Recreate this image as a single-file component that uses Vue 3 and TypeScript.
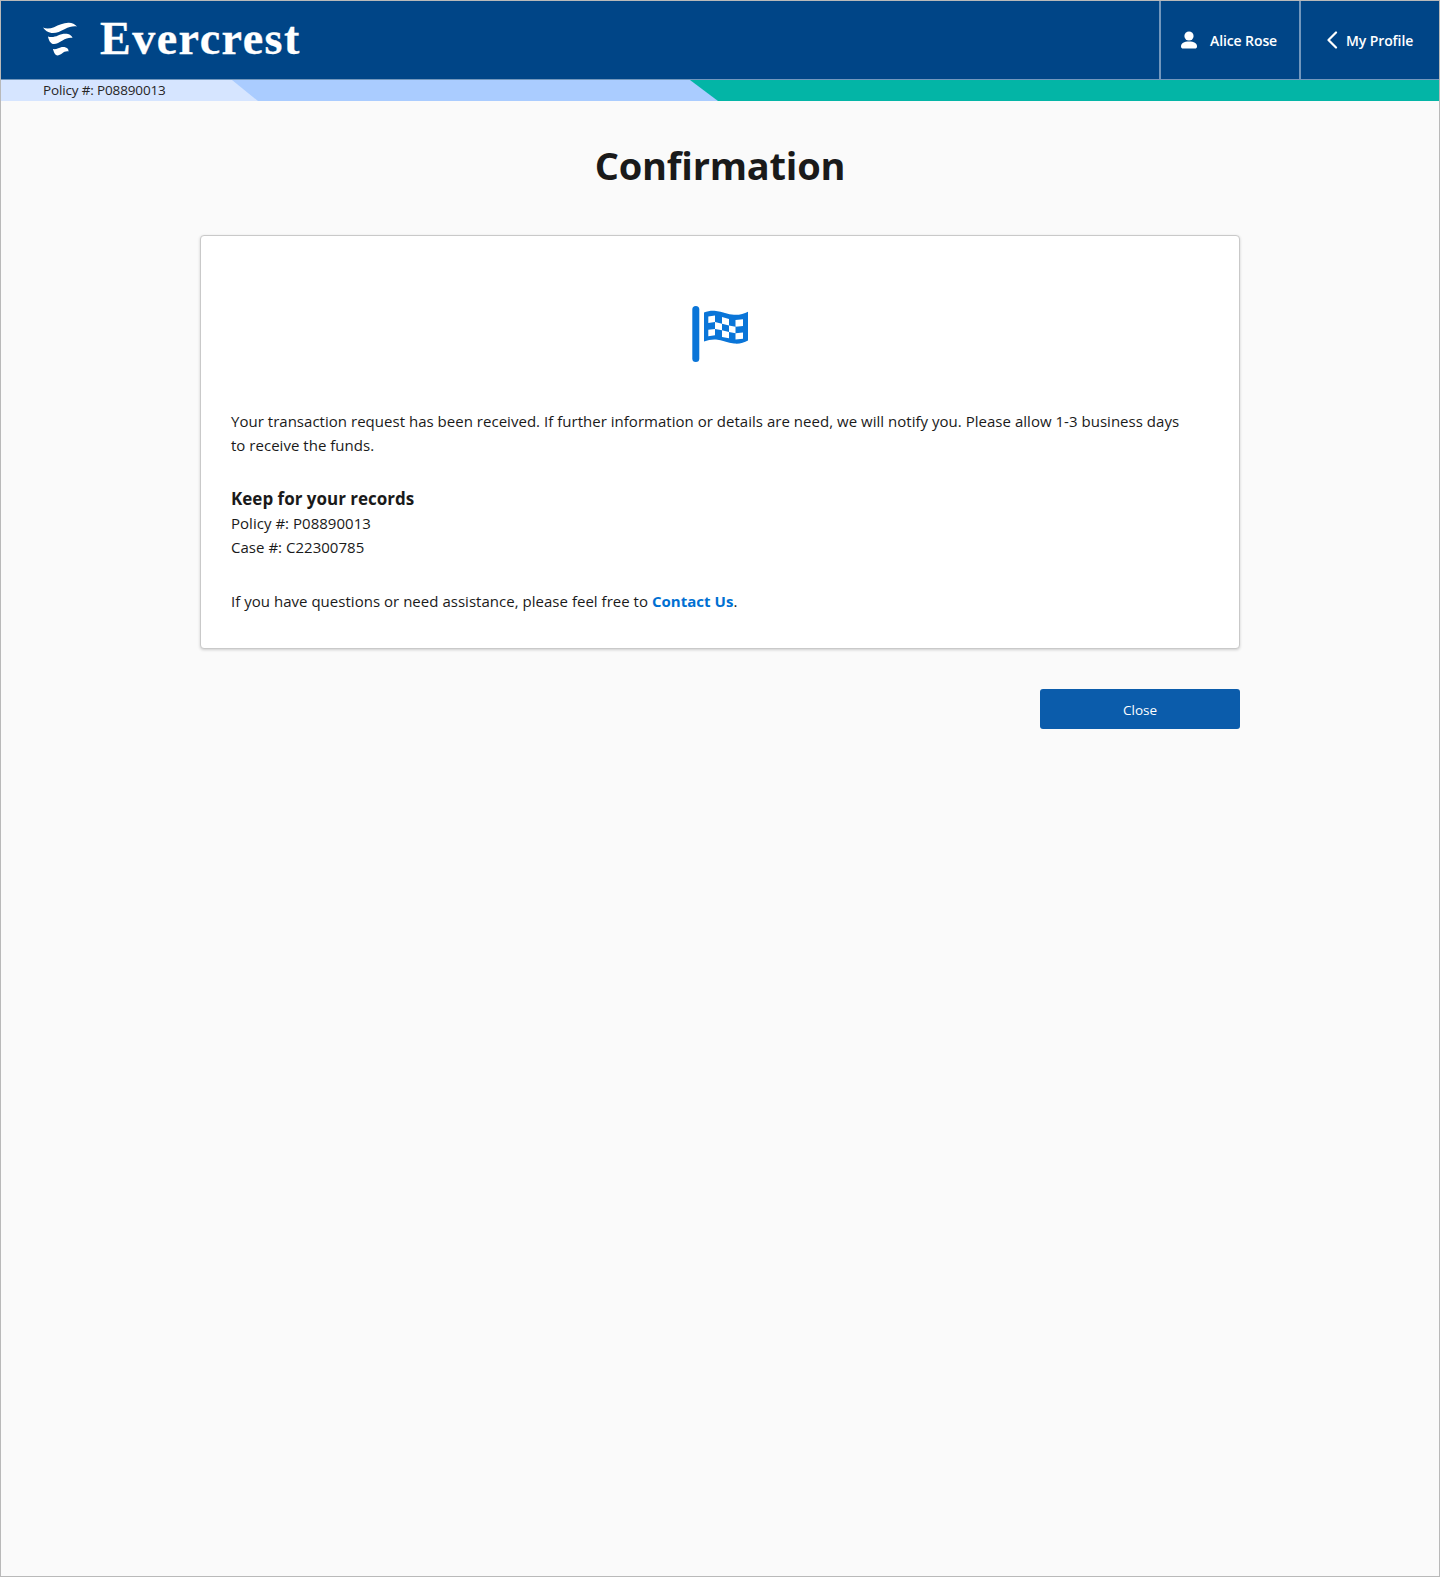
<script setup lang="ts">
const policy = 'P08890013'
const caseNo = 'C22300785'
</script>

<template>
  <div class="page">
    <header class="topbar">
      <div class="brand">
        <svg class="brand-mark" width="36" height="36" viewBox="0 0 36 36" aria-hidden="true">
          <path d="M1 5.500C4 7 8 6.800 12 5.200C17 3 22 0.500 27 0.800C30 1 33 2.300 35 4.500C31 3.800 27 5 23 7C18 9.500 14 11.500 9.500 11C6 10.500 3 8.500 1 5.500Z" fill="#fff"/>
          <path d="M6 14.500C9 15.500 13 15 16 13.500C19 12 23 11.300 26 12C28 12.500 30 14 30.500 16C27 15.500 24 16.500 20.500 18.500C17 20.500 14 22.500 11 22C8.500 21.500 6.500 18 6 14.500Z" fill="#fff"/>
          <path d="M11 27C14 27.500 16 26.500 18.500 25.500C21 24.500 24 25 26 27C26.500 28 26.500 29 26.500 29.500C24 29 22 30 20 31.500C18 33 15.500 34 14 33C12.500 32 11.500 29.500 11 27Z" fill="#fff"/>
        </svg>
        <span class="brand-name">Evercrest</span>
      </div>
      <nav class="topnav">
        <a class="navitem user">
          <svg width="18" height="18" viewBox="0 0 18 18" aria-hidden="true">
            <circle cx="9" cy="5" r="4.600" fill="#fff"/>
            <path d="M1 15.500C1 12 4 10.500 9 10.500S17 12 17 15.500C17 17 16 17.500 15 17.500H3C2 17.500 1 17 1 15.500Z" fill="#fff"/>
          </svg>
          <span>Alice Rose</span>
        </a>
        <a class="navitem profile">
          <svg width="12" height="18" viewBox="0 0 12 18" aria-hidden="true">
            <path d="M10 1.500L2.500 9L10 16.500" fill="none" stroke="#fff" stroke-width="2.200" stroke-linecap="round" stroke-linejoin="round"/>
          </svg>
          <span>My Profile</span>
        </a>
      </nav>
    </header>

    <div class="strip">
      <div class="strip-blue"></div>
      <div class="strip-light"><span>Policy #: {{ policy }}</span></div>
    </div>

    <main class="content">
      <h1 class="title">Confirmation</h1>

      <section class="card">
        <div class="flag">
          <svg width="56" height="56" viewBox="0 0 56 56" aria-hidden="true">
            <rect x="0.300" y="0" width="7" height="56" rx="3.500" fill="#0a75d8"/>
            <path fill="#0a75d8" d="M12 6.500C16 5 20 4.500 24 5C30 5.700 36 8.500 42 8.800C47 9.100 52 8 56 5.700V34.500C52 37 47 38 42 37.500C36 37 30 34 24 33.500C20 33.200 16 34 12 35.500Z"/>
            <g fill="#fff">
              <path d="M16.300 10.500L23 9.500V16L16.300 17Z"/>
              <path d="M30 11L37 13V19.500L30 17.800Z"/>
              <path d="M43.500 14L51 13.300V20L43.500 20.700Z"/>
              <path d="M23 16L30 17.800V24.300L23 23Z"/>
              <path d="M37 19.500L43.500 20.700V27.200L37 26Z"/>
              <path d="M16.300 23.800L23 23V29.300L16.300 30.300Z"/>
              <path d="M30 24.300L37 26V32.300L30 31Z"/>
              <path d="M43.500 27.200L51 26.500V32.800L43.500 33.500Z"/>
            </g>
          </svg>
        </div>

        <p class="lead">Your transaction request has been received. If further information or details are need, we will notify you. Please allow 1-3 business days to receive the funds.</p>

        <div class="records">
          <h2>Keep for your records</h2>
          <div>Policy #: {{ policy }}</div>
          <div>Case #: {{ caseNo }}</div>
        </div>

        <p class="help">If you have questions or need assistance, please feel free to <a class="link">Contact Us</a>.</p>
      </section>

      <div class="actions">
        <button class="close" type="button">Close</button>
      </div>
    </main>
  </div>
</template>

<style>
html, body { margin: 0; padding: 0; }
</style>

<style scoped>
.page {
  box-sizing: border-box;
  width: 1440px;
  height: 1577px;
  border: 1px solid #b9b9b9;
  background: #fafafa;
  font-family: "Open Sans", "Noto Sans", sans-serif;
  color: #1a1a1a;
  display: flex;
  flex-direction: column;
}
.topbar {
  height: 78px;
  background: #004587;
  display: flex;
  justify-content: space-between;
  flex: none;
}
.brand {
  display: flex;
  align-items: center;
  padding-left: 41px;
  gap: 22px;
}
.brand-mark { display: block; margin-top: -1px; }
.brand-name {
  font-family: "Liberation Serif", serif;
  font-size: 46px;
  font-weight: 700;
  line-height: 1;
  letter-spacing: 1.500px;
  color: #fff;
  margin-top: -3px;
  -webkit-text-stroke: 0.3px #fff;
}
.topnav { display: flex; }
.navitem {
  display: flex;
  align-items: center;
  box-sizing: border-box;
  height: 78px;
  border-left: 2px solid #7297bd;
  color: #fff;
  font-size: 14px;
  font-weight: 600;
  letter-spacing: -0.1px;
}
.user { width: 140px; padding-left: 19px; gap: 12px; }
.profile { width: 140px; padding-left: 25px; gap: 8px; }
.strip {
  height: 22px;
  flex: none;
  position: relative;
  background: #03b5a6;
  border-top: 1px solid #7297bd;
  overflow: hidden;
  box-sizing: border-box;
}
.strip-blue, .strip-light { position: absolute; top: 0; bottom: 0; left: 0; }
.strip-blue {
  width: 717px;
  background: #aaccff;
  clip-path: polygon(0 0, 689px 0, 100% 100%, 0 100%);
}
.strip-light {
  width: 257px;
  background: #d6e5ff;
  clip-path: polygon(0 0, 231px 0, 100% 100%, 0 100%);
}
.strip-light span {
  display: block;
  padding-left: 42px;
  font-size: 13.500px;
  line-height: 20px;
  letter-spacing: -0.150px;
  color: #262626;
}
.content {
  width: 1040px;
  margin: 0 auto;
  display: flex;
  flex-direction: column;
}
.title {
  margin: 37px 0 0;
  font-size: 38px;
  line-height: 54px;
  font-weight: 700;
  text-align: center;
  letter-spacing: -0.200px;
  color: #1a1a1a;
}
.card {
  box-sizing: border-box;
  margin-top: 43px;
  height: 414px;
  background: #fff;
  border: 1px solid #c9c9c9;
  border-radius: 4px;
  box-shadow: 0 1px 3px rgba(0, 0, 0, 0.18);
  padding: 70px 50px 0 30px;
  font-size: 15px;
  line-height: 24px;
  letter-spacing: 0.025px;
}
.flag { display: flex; justify-content: center; margin-right: -20px; }
.flag svg { display: block; }
.lead { margin: 47px 0 0; }
.records { margin-top: 30px; }
.records h2 {
  margin: 0;
  font-size: 17px;
  line-height: 24px;
  font-weight: 700;
  letter-spacing: 0;
}
.help { margin: 30px 0 0; }
.link { color: #0070d2; font-weight: 700; }
.actions { margin-top: 40px; display: flex; justify-content: flex-end; }
.close {
  width: 200px;
  height: 40px;
  border: 0;
  border-radius: 3px;
  padding: 2px 0 0;
  background: #0b5cab;
  color: #fff;
  font-family: inherit;
  font-size: 13.500px;
}
</style>
